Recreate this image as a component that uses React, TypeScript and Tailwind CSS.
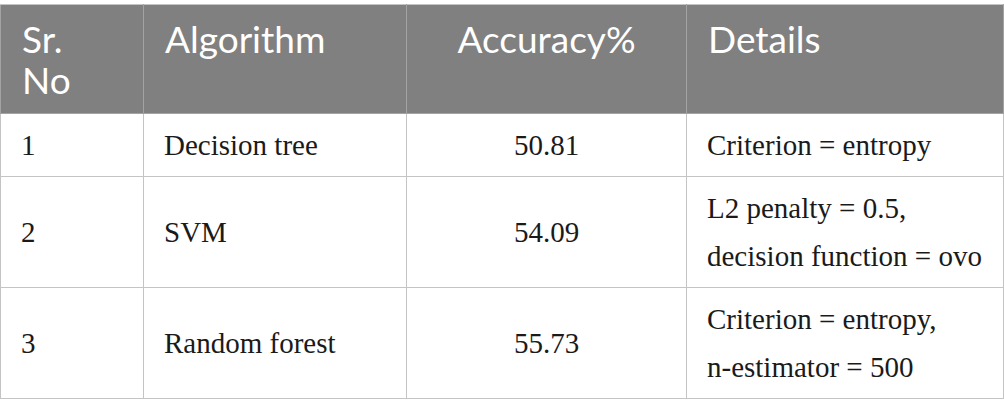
import React from "react";

const rows = [
  { n: "1", alg: "Decision tree", acc: "50.81", det: ["Criterion = entropy"] },
  { n: "2", alg: "SVM", acc: "54.09", det: ["L2 penalty = 0.5,", "decision function = ovo"] },
  { n: "3", alg: "Random forest", acc: "55.73", det: ["Criterion = entropy,", "n-estimator = 500"] },
];

export default function App() {
  return (
    <div className="w-[1004px] h-[417px] bg-white pt-[4px]">
      <table className="border-collapse w-[1003px] table-fixed">
        <colgroup>
          <col className="w-[143px]" />
          <col className="w-[263px]" />
          <col className="w-[280px]" />
          <col className="w-[317px]" />
        </colgroup>
        <thead>
          <tr className="bg-[#7f807f] text-white text-[37px] leading-[41px] font-['Lato',sans-serif] h-[109px]">
            <th className="border border-[#a3a3a3] border-t-[#c4c4c4] font-normal text-left align-top pl-[21px] pt-[13px]">Sr.<br />No</th>
            <th className="border border-[#a3a3a3] border-t-[#c4c4c4] font-normal text-left align-top pl-[21px] pt-[13px]">Algorithm</th>
            <th className="border border-[#a3a3a3] border-t-[#c4c4c4] font-normal text-center align-top pt-[13px]">Accuracy%</th>
            <th className="border border-[#a3a3a3] border-t-[#c4c4c4] font-normal text-left align-top pl-[21px] pt-[13px]">Details</th>
          </tr>
        </thead>
        <tbody className="text-[29px] leading-[48px] text-[#1a1a1a] font-['Liberation_Serif',serif]">
          {rows.map((r) => (
            <tr key={r.n}>
              <td className="border border-[#c4c4c4] pl-[20px] py-[7px] align-middle">{r.n}</td>
              <td className="border border-[#c4c4c4] pl-[20px] py-[7px] align-middle">{r.alg}</td>
              <td className="border border-[#c4c4c4] text-center py-[7px] align-middle">{r.acc}</td>
              <td className="border border-[#c4c4c4] pl-[20px] py-[7px] align-middle">
                {r.det.map((d, i) => (
                  <div key={i}>{d}</div>
                ))}
              </td>
            </tr>
          ))}
        </tbody>
      </table>
    </div>
  );
}
